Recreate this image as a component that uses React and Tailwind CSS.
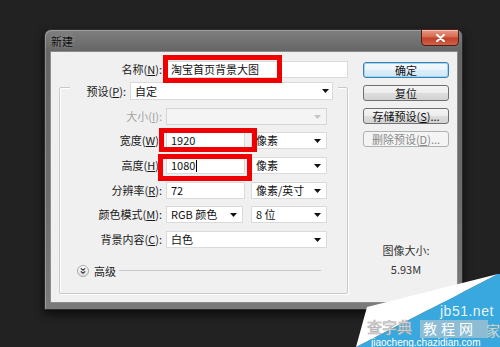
import React from "react";

const U = ({ c }) => <span className="underline underline-offset-[1px] decoration-[1px]">{c}</span>;

const Arrow = ({ disabled }) => (
  <svg width="7" height="4" viewBox="0 0 7 4" className="shrink-0">
    <path d="M0 0H7L3.5 4Z" fill={disabled ? "#c4c4c4" : "#111"} />
  </svg>
);

const Select = ({ cls, text, disabled }) => (
  <div
    className={`flex h-[17px] items-center justify-between border pl-[4px] pr-[5px] ${
      disabled ? "border-[#d6d6d6] bg-[#f4f4f4]" : "border-[#dadada] bg-white"
    } ${cls}`}
  >
    <span className="leading-none text-[#111]">{text}</span>
    <Arrow disabled={disabled} />
  </div>
);

const Input = ({ cls, text, caret }) => (
  <div className={`flex h-[17px] items-center border border-[#dadada] bg-white pl-[4px] ${cls}`}>
    <span className="leading-none text-[#111]">{text}</span>
    {caret && <span className="ml-[1px] h-[12px] w-px bg-black" />}
  </div>
);

const Label = ({ children, gray }) => (
  <div className={`w-[102px] text-right leading-none ${gray ? "text-[#a3a3a3]" : "text-[#1a1a1a]"}`}>{children}</div>
);

const Btn = ({ children, kind }) => {
  const base = "flex h-[16px] items-center justify-center rounded-[3px] border leading-none";
  const style =
    kind === "default"
      ? "border-[#3c7fb1] bg-[linear-gradient(180deg,#f4fafd_0%,#e9f4fb_50%,#dbeef9_50%,#cfe7f6_100%)] shadow-[inset_0_0_0_1px_#9fd6f3] text-[#111]"
      : kind === "disabled"
      ? "border-[#adb2b5] bg-[#f4f4f4] text-[#8a8a8a]"
      : "border-[#707070] bg-[linear-gradient(180deg,#f4f4f4_0%,#ececec_50%,#dedede_50%,#d2d2d2_100%)] text-[#111]";
  return <div className={`${base} ${style}`}>{children}</div>;
};

export default function App() {
  return (
    <div className="relative h-[347px] w-[500px] overflow-hidden bg-[#222222] pl-[44px] pt-[29px] font-['Noto_Sans_CJK_SC','Noto_Sans',sans-serif] text-[11px]">
      {/* window */}
      <div className="relative h-[281px] w-[419px] rounded-t-[7px] border border-[#2b2b2b] bg-[linear-gradient(180deg,#7f7f7f_0px,#666666_21px,#6c6c6c_60%,#7a7a7a_100%)] pb-[6px] pl-[5px] pr-[4px] shadow-[0_4px_10px_rgba(0,0,0,0.7),inset_1px_1px_0_rgba(255,255,255,0.25)]">
        <div className="flex h-[21px] items-center pl-[1px] pt-[1px]">
          <span className="leading-none text-[#101010] [text-shadow:0_0_4px_rgba(255,255,255,0.35)]">新建</span>
        </div>
        {/* close button */}
        <div className="absolute right-[3px] top-[-1px] flex h-[17px] w-[38px] items-center justify-center rounded-b-[4px] border border-[#4a2018] bg-[linear-gradient(180deg,#e79a86_0%,#d66a50_45%,#c0422a_55%,#cf6248_100%)] shadow-[inset_0_1px_0_rgba(255,255,255,0.4)]">
          <svg width="9" height="8" viewBox="0 0 9 8">
            <path d="M1 0.8L8 7.2M8 0.8L1 7.2" stroke="#fff" strokeWidth="2" strokeLinecap="round" />
          </svg>
        </div>

        {/* content */}
        <div className="relative flex h-[252px] w-[408px] border border-[#8c8c8c] bg-[#f0f0f0]">
          {/* left column */}
          <div className="ml-[8px] flex w-[289px] flex-col">
            <div className="mt-[9px] flex h-[17px] items-center">
              <div className="w-[103px] text-right leading-none text-[#1a1a1a]">
                名称(<U c="N" />):
              </div>
              <Input cls="ml-[4px] w-[182px]" text="淘宝首页背景大图" />
            </div>

            {/* group box */}
            <div className="mt-[9px] flex h-[207px] flex-col rounded-[2px] border border-[#c9c9c9] shadow-[1px_1px_0_#fff,inset_1px_1px_0_#fff]">
              <div className="-mt-[6px] ml-[10px] flex h-[18px] w-[268px] items-center bg-[#f0f0f0] pr-[5px]">
                <div className="w-[56px] text-right leading-none text-[#1a1a1a]">
                  预设(<U c="P" />):
                </div>
                <div className="ml-[4px] flex h-[18px] w-[203px] items-center justify-between border border-[#dadada] bg-white pl-[4px] pr-[3px]">
                  <span className="leading-none text-[#111]">自定</span>
                  <Arrow />
                </div>
              </div>

              <div className="mt-[8px] flex h-[17px] items-center">
                <Label gray>
                  大小(<U c="I" />):
                </Label>
                <Select cls="ml-[4px] w-[161px]" text="" disabled />
              </div>

              <div className="mt-[7px] flex h-[17px] items-center">
                <Label>
                  宽度(<U c="W" />):
                </Label>
                <Input cls="ml-[4px] w-[79px]" text="1920" />
                <Select cls="ml-[6px] w-[76px]" text="像素" />
              </div>

              <div className="mt-[8px] flex h-[17px] items-center">
                <Label>
                  高度(<U c="H" />):
                </Label>
                <Input cls="ml-[4px] w-[79px]" text="1080" caret />
                <Select cls="ml-[6px] w-[76px]" text="像素" />
              </div>

              <div className="mt-[8px] flex h-[17px] items-center">
                <Label>
                  分辨率(<U c="R" />):
                </Label>
                <Input cls="ml-[4px] w-[79px]" text="72" />
                <Select cls="ml-[6px] w-[76px]" text="像素/英寸" />
              </div>

              <div className="mt-[7px] flex h-[17px] items-center">
                <Label>
                  颜色模式(<U c="M" />):
                </Label>
                <Select cls="ml-[4px] w-[77px]" text="RGB 颜色" />
                <Select cls="ml-[8px] w-[76px]" text="8 位" />
              </div>

              <div className="mt-[8px] flex h-[17px] items-center">
                <Label>
                  背景内容(<U c="C" />):
                </Label>
                <Select cls="ml-[4px] w-[161px]" text="白色" />
              </div>

              <div className="ml-[17px] mr-[26px] mt-[16px] flex h-[14px] items-center">
                <svg width="12" height="12" viewBox="0 0 12 12" className="shrink-0">
                  <defs>
                    <linearGradient id="adv" x1="0" y1="0" x2="0" y2="1">
                      <stop offset="0" stopColor="#ffffff" />
                      <stop offset="1" stopColor="#dcdcdc" />
                    </linearGradient>
                  </defs>
                  <circle cx="6" cy="6" r="5.5" fill="url(#adv)" stroke="#a9a9a9" />
                  <path d="M3.8 3.4L6 5.3L8.2 3.4M3.8 6.4L6 8.3L8.2 6.4" fill="none" stroke="#333" strokeWidth="1.2" />
                </svg>
                <span className="ml-[5px] leading-none text-[#1a1a1a]">高级</span>
                <div className="ml-[3px] h-[2px] flex-1 border-t border-[#c9c9c9] border-b-white" />
              </div>
            </div>
          </div>

          {/* right column */}
          <div className="ml-[15px] mt-[10px] flex w-[86px] flex-col gap-[7px]">
            <Btn kind="default">确定</Btn>
            <Btn>复位</Btn>
            <Btn>
              存储预设(<U c="S" />)...
            </Btn>
            <Btn kind="disabled">
              删除预设(<U c="D" />)...
            </Btn>
            <div className="mt-[89px] flex flex-col items-center text-[#333]">
              <span className="leading-[14px]">图像大小:</span>
              <span className="mt-[5px] leading-[14px]">5.93M</span>
            </div>
          </div>

          {/* red annotation boxes */}
          <div className="absolute left-[112px] top-[3px] h-[28px] w-[119px] border-[5px] border-[#f00000]" />
          <div className="absolute left-[108px] top-[76px] h-[24px] w-[98px] border-[5px] border-[#f00000]" />
          <div className="absolute left-[107px] top-[102px] h-[27px] w-[94px] border-[5px] border-[#f00000]" />
        </div>
      </div>

      {/* watermark */}
      <svg className="absolute left-[355px] top-[272px]" width="145" height="75" viewBox="0 0 145 75">
        <polygon points="143,2 145,2 145,75 1,75" fill="#38a8de" />
        <polygon points="12,35 143,2 1,75" fill="#ffffff" />
        <text x="85" y="44" fontFamily="'Liberation Sans', sans-serif" fontSize="14" letterSpacing="0.5" fill="#ffffff" fillOpacity="0.9">
          jb51.net
        </text>
        <text x="12" y="61" fontFamily="'Noto Sans CJK SC', sans-serif" fontSize="15" fill="#f6f6f6" stroke="#a9a9a9" strokeWidth="0.6">
          查字典
        </text>
        <rect x="65" y="48" width="68" height="18" fill="#a9c3d1" fillOpacity="0.75" />
        <text x="68" y="62" fontFamily="'Noto Sans CJK SC', sans-serif" fontSize="14" letterSpacing="4" fill="#ffffff">
          教程网
        </text>
        <text x="131" y="64" fontFamily="'Noto Sans CJK SC', sans-serif" fontSize="14" fill="#ffffff" stroke="#8aa" strokeWidth="0.4">
          家
        </text>
        <text x="16" y="74" fontFamily="'Liberation Sans', sans-serif" fontSize="10" fill="#ffffff">
          jiaocheng.chazidian.com
        </text>
      </svg>
    </div>
  );
}
